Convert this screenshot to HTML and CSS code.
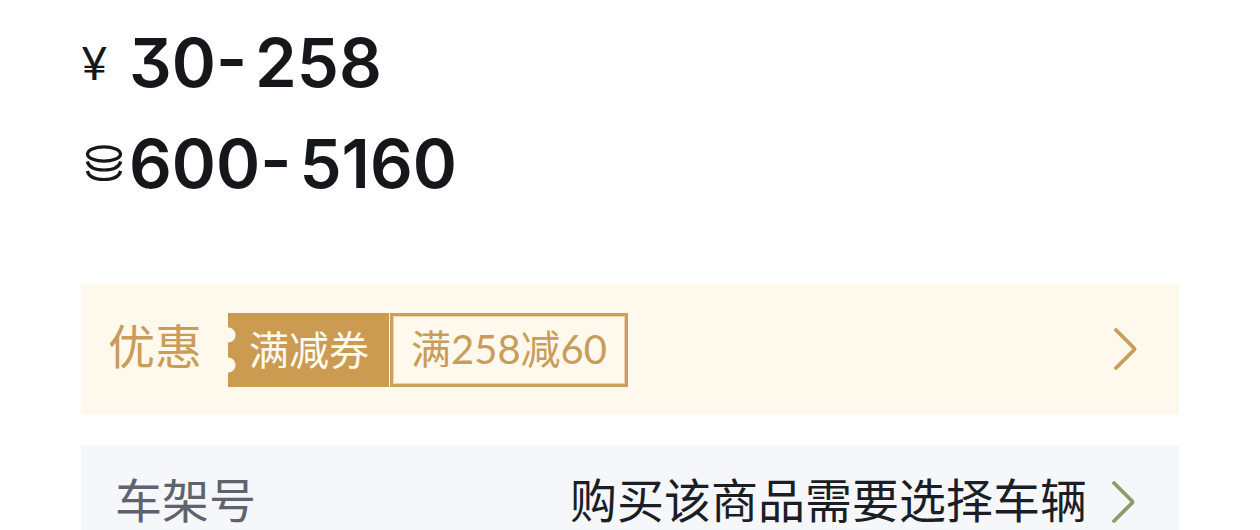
FILE: index.html
```html
<!DOCTYPE html>
<html lang="zh-CN">
<head>
<meta charset="utf-8">
<meta name="viewport" content="width=device-width, initial-scale=1">
<title>优惠</title>
<link rel="stylesheet" href="styles.css">
</head>
<body>
<main class="product">
  <section class="prices">
    <div class="price">
      <span class="unit yen">¥</span>
      <span class="range"><span>30-</span><span>258</span></span>
    </div>
    <div class="price">
      <span class="unit">
        <svg class="coins" viewBox="0 0 40 40" fill="none" stroke="currentColor" stroke-width="3.2" aria-hidden="true">
          <ellipse cx="20" cy="10" rx="16.5" ry="7.2"/>
          <path d="M3.3 17.5C5 23.5 11.500 26 20 26S35 23.5 36.7 17.5"/>
          <path d="M3.3 27C5 33 11.500 35.5 20 35.5S35 33 36.7 27"/>
        </svg>
      </span>
      <span class="range"><span>600-</span><span>5160</span></span>
    </div>
  </section>
  <button class="row offer" type="button">
    <span class="label">优惠</span>
    <span class="coupon">
      <span class="coupon-type">满减券</span>
      <span class="coupon-value">满258减60</span>
    </span>
    <svg class="chevron" viewBox="0 0 24 44" fill="none" stroke="currentColor" stroke-width="3.8" stroke-linecap="round" stroke-linejoin="round" aria-hidden="true"><path d="M3 3L21 21Q22 22 21 23L3 41"/></svg>
  </button>
  <button class="row vehicle" type="button">
    <span class="label">车架号</span>
    <span class="hint">购买该商品需要选择车辆</span>
    <svg class="chevron" viewBox="0 0 24 44" fill="none" stroke="currentColor" stroke-width="3.8" stroke-linecap="round" stroke-linejoin="round" aria-hidden="true"><path d="M3 3L21 21Q22 22 21 23L3 41"/></svg>
  </button>
</main>
</body>
</html>
```

FILE: styles.css
```css
* {
  box-sizing: border-box;
}

body {
  margin: 0;
  background: #fff;
  color: #15171b;
  font-family: "Noto Sans CJK SC", sans-serif;
}

.product {
  padding: 12px 81px 0;
}

.prices {
  margin-bottom: 70px;
}

.price {
  display: flex;
  align-items: center;
  height: 101px;
}

.unit {
  display: flex;
  width: 48px;
}

.yen {
  font: 400 46px/48px "Lato", sans-serif;
}

.coins {
  width: 40px;
  height: 40px;
  margin-left: 3px;
}

.range {
  display: flex;
  gap: 8px;
  font: 600 67px/80px "Inter", sans-serif;
  font-feature-settings: "cv09";
}

.row {
  display: flex;
  align-items: center;
  width: 100%;
  border: 0;
  font-family: inherit;
  font-size: 47px;
  line-height: 60px;
  text-align: left;
}

.chevron {
  flex: none;
  width: 24px;
  height: 44px;
}

.offer {
  height: 130px;
  margin-bottom: 32px;
  padding: 0 42px 0 27px;
  background: #fff8ed;
  color: #c99d59;
}

.offer .label {
  padding-bottom: 10px;
}

.offer .chevron {
  margin-left: auto;
}

.coupon {
  display: flex;
  gap: 1px;
  height: 74px;
  margin: 2px 0 0 26px;
  font-size: 40px;
  line-height: 70px;
}

.coupon-type {
  padding: 0 20px 0 21px;
  background:
    radial-gradient(circle at 0 22px, #fff8ed 7px, transparent 8px),
    radial-gradient(circle at 0 52px, #fff8ed 7px, transparent 8px),
    #cb9b51;
  color: #fffaf0;
}

.coupon-value {
  padding: 0 18px;
  border: 3px solid #cb9f60;
  box-shadow: inset 0 0 0 1px #f0d3aa;
  font-family: "Lato", "Noto Sans CJK SC", sans-serif;
  line-height: 66px;
}

.vehicle {
  height: 84px;
  padding: 20px 44px 0 34px;
  background: #f5f7fb;
  color: #8e9b6b;
}

.vehicle .label {
  color: #5e636e;
}

.hint {
  margin: 0 24px 0 auto;
  color: #1c1e26;
}

.vehicle .chevron {
  margin-top: 8px;
}
```
